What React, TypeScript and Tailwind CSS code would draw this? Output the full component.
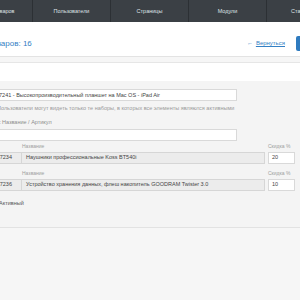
const navItems = ["Каталог товаров", "Пользователи", "Страницы", "Модули", "Статистика"];

const rows = [
  { code: "7234", name: "Наушники профессиональные Koss BT540i", discount: "20" },
  { code: "7236", name: "Устройство хранения данных, флеш накопитель GOODRAM Twister 3.0", discount: "10" },
];

export default function App() {
  return (
    <div className="w-[300px] h-[300px] overflow-hidden bg-[#f6f6f6] font-['Liberation_Sans',Arial,sans-serif]">
      {/* Top menu */}
      <nav className="flex h-[22px] bg-[#3b4045] ml-[-45px]">
        {navItems.map((item) => (
          <div
            key={item}
            className="w-[78px] shrink-0 flex items-center justify-center border-r border-[#2c3034] text-[5.5px] text-[#dfe3e6]"
          >
            {item}
          </div>
        ))}
      </nav>

      {/* Page header */}
      <div className="h-[35px] bg-white border-b border-[#e3e3e3] flex items-center pt-[9px] ml-[-40px] mr-[-6px]">
        <h1 className="text-[8px] text-[#3480c4] whitespace-nowrap -ml-[3px]">Наборы товаров: 16</h1>
        <div className="ml-auto flex items-center gap-[3px]">
          <span className="text-[6px] text-[#3480c4]">←</span>
          <a className="text-[6px] text-[#3480c4] underline mr-[8px]">Вернуться</a>
          <span className="w-[10px] h-[15px] bg-[#2f7bbf] rounded-l-[2px]" />
        </div>
      </div>

      {/* Form panel */}
      <div className="mt-[5px] border-t border-[#e6e6e6]">
        <div className="h-[18px] bg-white" />
        <div className="bg-[#f4f4f4] border-b border-[#e2e2e2] pb-[20px]">
          <div className="ml-[-40px] w-[335px] pt-[8px]">
            <div className="w-[277px] h-[12px] bg-white border border-[#d9d9d9] flex items-center pl-[31px] text-[5.5px] text-[#444] whitespace-nowrap">
              ID 7241 - Высокопроизводительный планшет на Mac OS - iPad Air
            </div>
            <p className="mt-[3px] pl-[37px] text-[5.5px] text-[#9a9a9a] whitespace-nowrap">
              Пользователи могут видеть только те наборы, в которых все элементы являются активными
            </p>
            <p className="mt-[6px] flex text-[5.5px] text-[#8d8d8d] whitespace-nowrap">
              <span className="w-[41px] text-right">Поиск: </span>
              <span className="ml-[1px]">Название / Артикул</span>
            </p>
            <div className="mt-[2px] w-[277px] h-[12px] bg-white border border-[#d9d9d9]" />

            <div className="mt-[2px] flex flex-col gap-[6px]">
              {rows.map((r) => (
                <div key={r.code}>
                  <div className="flex text-[5px] text-[#a0a0a0] h-[8px] items-end">
                    <span className="ml-[62px]">Название</span>
                    <span className="ml-auto w-[27px]">Скидка %</span>
                  </div>
                  <div className="flex h-[12px] mt-[1px]">
                    <div className="w-[62px] bg-[#ececec] border border-[#d6d6d6] flex items-center justify-end pr-[9px] text-[5.5px] text-[#444]">
                      ID {r.code}
                    </div>
                    <div className="w-[243px] bg-[#ececec] border border-l-0 border-[#d6d6d6] flex items-center pl-[4px] text-[5.5px] text-[#444] whitespace-nowrap">
                      {r.name}
                    </div>
                    <div className="ml-[3px] w-[27px] bg-white border border-[#d9d9d9] flex items-center pl-[3px] text-[5.5px] text-[#444]">
                      {r.discount}
                    </div>
                  </div>
                </div>
              ))}
            </div>

            <label className="mt-[8px] flex items-center gap-[3px] text-[5.5px] text-[#555]">
              <span className="ml-[30px] w-[6px] h-[6px] border border-[#bbb] bg-white" />
              Активный
            </label>
          </div>
        </div>
      </div>
    </div>
  );
}
